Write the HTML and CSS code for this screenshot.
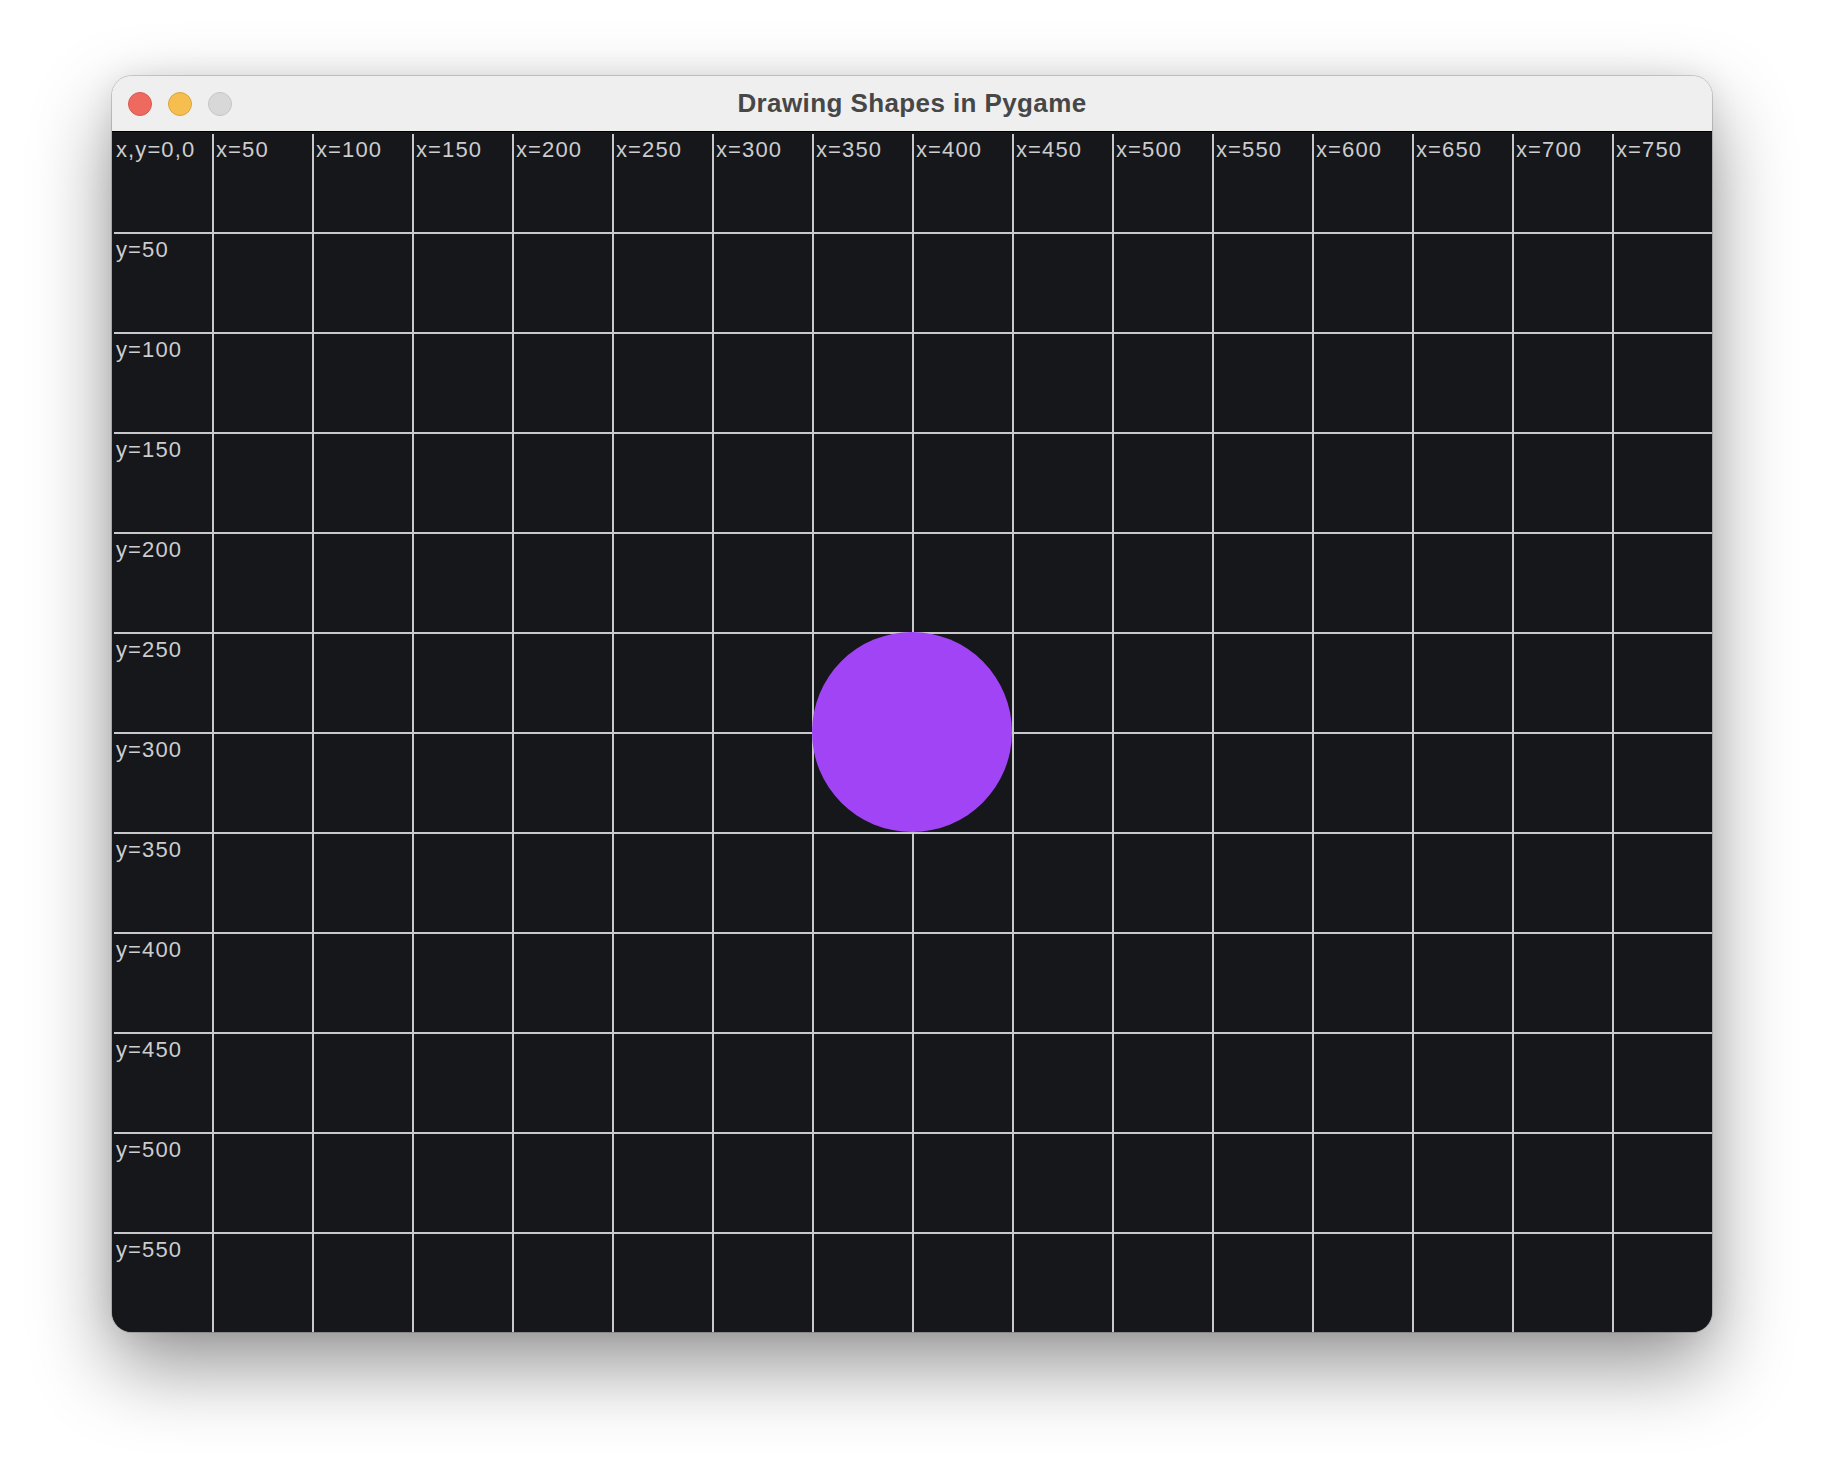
FILE: index.html
```html
<!DOCTYPE html>
<html lang="en">
<head>
<meta charset="utf-8">
<title>Drawing Shapes in Pygame</title>
<link rel="stylesheet" href="styles.css">
</head>
<body>
<div class="window">
  <div class="titlebar">
    <div class="lights">
      <span class="light red"></span>
      <span class="light yellow"></span>
      <span class="light gray"></span>
    </div>
    <div class="title">Drawing Shapes in Pygame</div>
    <div class="spacer"></div>
  </div>
  <div class="canvas">
    <div class="labels">
      <span class="lab">x,y=0,0</span>
      <span class="lab">x=50</span>
      <span class="lab">x=100</span>
      <span class="lab">x=150</span>
      <span class="lab">x=200</span>
      <span class="lab">x=250</span>
      <span class="lab">x=300</span>
      <span class="lab">x=350</span>
      <span class="lab">x=400</span>
      <span class="lab">x=450</span>
      <span class="lab">x=500</span>
      <span class="lab">x=550</span>
      <span class="lab">x=600</span>
      <span class="lab">x=650</span>
      <span class="lab">x=700</span>
      <span class="lab">x=750</span>
      <span class="lab ylab">y=50</span>
      <span class="lab ylab">y=100</span>
      <span class="lab ylab">y=150</span>
      <span class="lab ylab">y=200</span>
      <span class="lab ylab">y=250</span>
      <span class="lab ylab">y=300</span>
      <span class="lab ylab">y=350</span>
      <span class="lab ylab">y=400</span>
      <span class="lab ylab">y=450</span>
      <span class="lab ylab">y=500</span>
      <span class="lab ylab">y=550</span>
    </div>
    <div class="circle"></div>
  </div>
</div>
</body>
</html>
```

FILE: styles.css
```css
html, body {
  margin: 0;
  padding: 0;
  background: #ffffff;
}

body {
  padding-top: 76px;
  min-height: 1480px;
  box-sizing: border-box;
  font-family: "Liberation Sans", Arial, sans-serif;
}

.window {
  width: 1600px;
  margin: 0 auto;
  border-radius: 20px;
  overflow: hidden;
  background: #efefef;
  box-shadow: 0 0 0 1px rgba(0, 0, 0, 0.16), 0 34px 80px rgba(0, 0, 0, 0.42), 0 0 30px rgba(0, 0, 0, 0.08);
}

.titlebar {
  height: 55px;
  border-bottom: 1px solid #000000;
  display: grid;
  grid-template-columns: 1fr auto 1fr;
  align-items: center;
  background: #efefef;
}

.lights {
  display: flex;
  gap: 16px;
  padding-left: 16px;
}

.light {
  width: 22px;
  height: 22px;
  border-radius: 50%;
  border: 1px solid transparent;
}

.red {
  background: #ee6a5f;
  border-color: #d75a50;
}

.yellow {
  background: #f5be4f;
  border-color: #d9a63f;
}

.gray {
  background: #d8d8d8;
  border-color: #c4c4c4;
}

.title {
  font-family: "Liberation Sans", Arial, sans-serif;
  font-weight: 700;
  font-size: 26px;
  letter-spacing: 0.4px;
  color: #474747;
  line-height: 30px;
  padding-bottom: 2px;
}

.canvas {
  position: relative;
  width: 1600px;
  height: 1200px;
  box-sizing: border-box;
  padding: 2px 0 0 2px;
  overflow: hidden;
  background-color: #16171b;
  background-image:
    linear-gradient(90deg, #c9c9cb 2px, transparent 2px),
    linear-gradient(180deg, #c9c9cb 2px, transparent 2px),
    linear-gradient(#16171b, #16171b);
  background-size: 100px 100px, 100px 100px, auto;
  background-origin: border-box, border-box, border-box;
  background-clip: content-box, content-box, border-box;
}

.labels {
  display: grid;
  grid-template-columns: repeat(16, 100px);
  grid-template-rows: repeat(12, 100px);
}

.lab {
  padding: 4px 0 0 2px;
  font-family: "Liberation Sans", Arial, sans-serif;
  font-size: 22px;
  line-height: 24px;
  letter-spacing: 1.1px;
  color: #cdcdcd;
  white-space: nowrap;
}

.ylab {
  grid-column: 1;
}

.circle {
  position: absolute;
  left: 700px;
  top: 500px;
  width: 200px;
  height: 200px;
  border-radius: 50%;
  background: #a144f5;
}
```
